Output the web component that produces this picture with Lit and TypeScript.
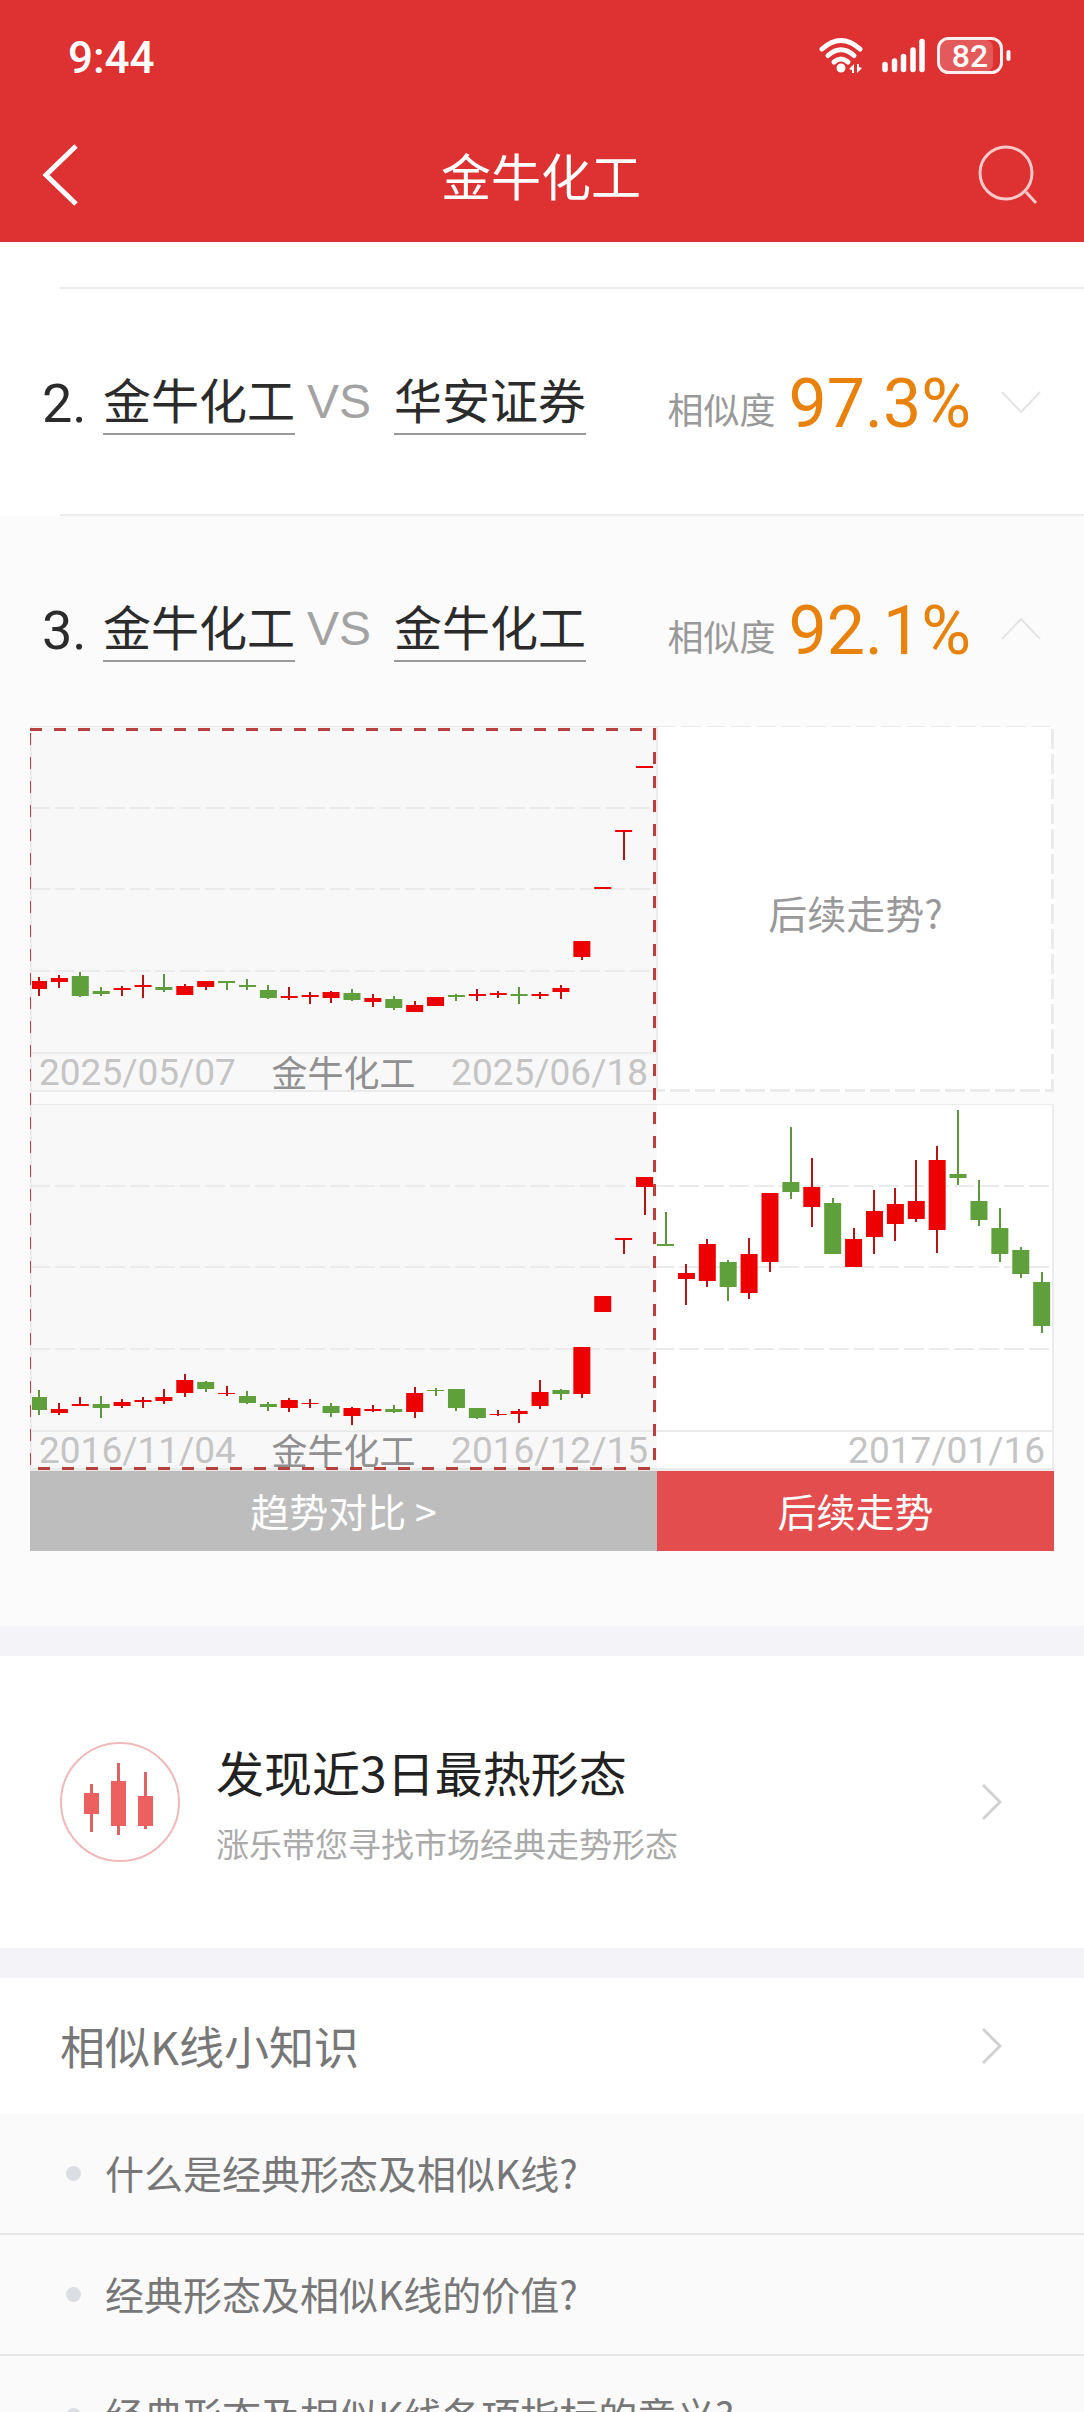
import { LitElement, html, svg, css, nothing } from "lit";
import { customElement, property, state } from "lit/decorators.js";

/** One candle: colour, then high, body top, body bottom and low in plot units. */
type Candle = ["r" | "g", number, number, number, number];

const STEP = 1024 / 49;
const BODY = 17;

const CURRENT: Candle[] = [
  ["r", 250, 254, 262, 269], ["r", 248, 251, 255, 261], ["g", 245, 249, 269, 270],
  ["g", 260, 264, 267, 269], ["r", 259, 261, 263, 269], ["r", 248, 258, 260, 271],
  ["g", 247, 260, 263, 265], ["r", 257, 259, 268, 268], ["r", 254, 254, 260, 263],
  ["g", 254, 254, 256, 263], ["g", 252, 258, 260, 263], ["g", 258, 263, 271, 272],
  ["r", 260, 269, 271, 273], ["r", 265, 268, 270, 277], ["r", 264, 265, 271, 276],
  ["g", 262, 266, 273, 274], ["r", 267, 271, 275, 280], ["g", 269, 272, 281, 283],
  ["r", 274, 278, 285, 285], ["r", 270, 270, 279, 279], ["g", 267, 268, 270, 274],
  ["r", 262, 267, 269, 274], ["r", 264, 266, 268, 271], ["g", 260, 267, 269, 277],
  ["r", 265, 267, 269, 272], ["r", 258, 261, 265, 272], ["r", 214, 214, 230, 233],
  ["r", 160, 160, 162, 162], ["r", 103, 103, 105, 133], ["r", 39, 39, 41, 41],
];

const HISTORY: Candle[] = [
  ["g", 285, 292, 305, 310], ["r", 298, 304, 308, 310], ["r", 292, 299, 301, 301],
  ["g", 291, 299, 303, 313], ["r", 294, 297, 301, 303], ["r", 292, 295, 297, 303],
  ["r", 284, 292, 296, 299], ["r", 269, 275, 288, 292], ["g", 276, 277, 284, 287],
  ["r", 281, 288, 289, 291], ["g", 286, 291, 298, 299], ["g", 297, 299, 302, 306],
  ["r", 293, 295, 303, 307], ["r", 294, 298, 299, 303], ["g", 298, 301, 308, 312],
  ["r", 302, 303, 311, 320], ["r", 300, 304, 306, 307], ["g", 300, 304, 307, 308],
  ["r", 282, 288, 307, 313], ["g", 283, 285, 286, 291], ["g", 284, 284, 303, 306],
  ["g", 303, 303, 313, 314], ["r", 305, 309, 310, 311], ["r", 304, 306, 309, 318],
  ["r", 275, 287, 301, 304], ["g", 284, 285, 289, 295], ["r", 242, 242, 289, 293],
  ["r", 191, 191, 207, 207], ["r", 133, 133, 135, 149], ["r", 72, 72, 82, 110],
];

const FOLLOW: Candle[] = [
  ["g", 107, 139, 141, 141], ["r", 159, 168, 174, 200], ["r", 134, 139, 176, 182],
  ["g", 155, 157, 182, 196], ["r", 133, 149, 188, 194], ["r", 88, 88, 157, 167],
  ["g", 22, 77, 87, 94], ["r", 53, 82, 102, 122], ["g", 93, 98, 149, 149],
  ["r", 123, 134, 162, 162], ["r", 85, 106, 132, 149], ["r", 83, 99, 119, 136],
  ["r", 55, 96, 114, 117], ["r", 41, 55, 125, 148], ["g", 5, 69, 73, 80],
  ["g", 75, 96, 115, 121], ["g", 103, 123, 149, 157], ["g", 142, 145, 169, 173],
  ["g", 167, 177, 221, 228],
];

const QUESTIONS = [
  "什么是经典形态及相似K线?",
  "经典形态及相似K线的价值?",
  "经典形态及相似K线各项指标的意义?",
];

@customElement("candle-plot")
export class CandlePlot extends LitElement {
  @property({ attribute: false }) candles: Candle[] = [];
  @property({ type: Number }) span = 627;
  @property({ type: Number }) phase = 0;

  static styles = css`
    :host { display: block; }
    svg { display: block; width: 100%; height: auto; }
    .grid { stroke: #ebebeb; stroke-width: 2; stroke-dasharray: 20 5; }
    .r { fill: #ec0000; }
    .g { fill: #5fa03c; }
    .wick.r { fill: #b81414; }
    .wick.g { fill: #5d9640; }
  `;

  render() {
    return html`<svg viewBox="0 0 ${this.span} 325" aria-hidden="true">
      ${[81, 162, 244].map(
        (y) => svg`<line class="grid" x1="0" y1=${y} x2=${this.span} y2=${y} stroke-dashoffset=${this.phase}></line>`
      )}
      ${this.candles.map(([tone, high, top, bottom, low], i) => {
        const x = i * STEP;
        return svg`
          <rect class="wick ${tone}" x=${Math.round(x + BODY / 2) - 1} y=${high} width="2" height=${low - high}></rect>
          <rect class=${tone} x=${x} y=${top} width=${BODY} height=${bottom - top}></rect>`;
      })}
    </svg>`;
  }
}

@customElement("trend-compare")
export class TrendCompare extends LitElement {
  static styles = css`
    :host {
      display: grid;
      position: relative;
      grid-template-columns: 627fr 397fr;
      margin: 0 30px;
      font-family: "Noto Sans CJK SC", sans-serif;
    }
    .panel { background: #f8f8f8; border-top: 1px solid #ebebeb; min-width: 0; }
    .first { margin-bottom: 12px; }
    .follow { background: #fff; box-shadow: inset -2px 0 #ebebeb; }
    .labels {
      display: flex;
      justify-content: space-between;
      align-items: center;
      height: 36px;
      padding: 0 9px;
      border-top: 2px solid #ebebeb;
      border-bottom: 2px solid #ebebeb;
      color: #c4c4c4;
      white-space: nowrap;
    }
    .second .labels { border-bottom-width: 3px; }
    .follow .labels { justify-content: flex-end; }
    time { font: 37px/36px Roboto, sans-serif; padding-top: 2px; }
    .stock { font-size: 36px; line-height: 34px; color: #909090; padding-bottom: 2px; }
    .unknown {
      position: relative;
      display: flex;
      align-items: center;
      justify-content: center;
      background: #fff;
      color: #999;
      font-size: 39px;
      line-height: 56px;
    }
    .unknown span { padding-top: 6px; }
    .edge, .frame { position: absolute; inset: 0; width: 100%; height: 100%; }
    .frame { grid-area: 1 / 1 / 3 / 2; overflow: visible; pointer-events: none; }
    .edge line { stroke: #ebebeb; stroke-width: 6; stroke-dasharray: 20 5; }
    .edge .top { stroke-width: 2; }
    .frame .rule { stroke: #ebebeb; stroke-width: 2; }
    .frame .dash { stroke: #b8403e; stroke-width: 3; stroke-dasharray: 12 12; }
    .frame .thin { stroke-width: 1; }
    .tab {
      appearance: none;
      border: 0;
      margin: 0;
      padding: 0 0 2px;
      height: 80px;
      color: #fff;
      font: 39px/56px "Noto Sans CJK SC", sans-serif;
      background: #bdbdbd;
    }
    .tab.on { background: #e44d4e; }
  `;

  private labels(from: string, to: string) {
    return html`<div class="labels">
      <time>${from}</time><span class="stock">金牛化工</span><time>${to}</time>
    </div>`;
  }

  render() {
    return html`
      <div class="panel first">
        <candle-plot .candles=${CURRENT}></candle-plot>
        ${this.labels("2025/05/07", "2025/06/18")}
      </div>
      <div class="unknown first">
        <svg class="edge" aria-hidden="true">
          <line class="top" x1="0" y1="0" x2="100%" y2="0" stroke-dashoffset="1"></line>
          <line x1="100%" y1="0" x2="100%" y2="100%" stroke-dashoffset="-3"></line>
          <line x1="0" y1="100%" x2="100%" y2="100%" stroke-dashoffset="12"></line>
        </svg>
        <span>后续走势?</span>
      </div>
      <div class="panel second">
        <candle-plot .candles=${HISTORY}></candle-plot>
        ${this.labels("2016/11/04", "2016/12/15")}
      </div>
      <div class="panel second follow">
        <candle-plot .candles=${FOLLOW} .span=${397} .phase=${3}></candle-plot>
        <div class="labels"><time>2017/01/16</time></div>
      </div>
      <svg class="frame" aria-hidden="true">
        <line class="rule" x1="1" y1="0" x2="1" y2="100%"></line>
        <line class="rule" x1="100%" y1="0" x2="100%" y2="366"></line>
        <line class="dash" x1="0" y1="3.5" x2="99.5%" y2="3.5"></line>
        <line class="dash thin" x1="0.5" y1="7" x2="0.5" y2="742"></line>
        <svg x="100%" overflow="visible">
          <line class="dash" x1="-2.5" y1="2" x2="-2.5" y2="742"></line>
        </svg>
        <svg y="100%" overflow="visible">
          <line class="dash" x1="8" y1="-2.5" x2="622" y2="-2.5"></line>
        </svg>
      </svg>
      <button class="tab" type="button">趋势对比 &gt;</button>
      <button class="tab on" type="button">后续走势</button>
    `;
  }
}

@customElement("match-row")
export class MatchRow extends LitElement {
  @property({ type: Number }) rank = 1;
  @property() left = "";
  @property() right = "";
  @property() score = "";
  @property({ type: Boolean, reflect: true }) open = false;

  static styles = css`
    :host { display: block; background: #fff; font-family: "Noto Sans CJK SC", sans-serif; }
    :host([open]) { background: #fbfbfb; }
    .row {
      display: flex;
      align-items: center;
      padding: 74px 43px 73px 42px;
      white-space: nowrap;
    }
    :host([open]) .row { padding-bottom: 58px; }
    .rank { width: 61px; padding-top: 4px; font: 54px/64px Roboto, sans-serif; color: #2b2b2b; }
    .name {
      margin-bottom: 6px;
      border-bottom: 2px solid #999;
      color: #2b2b2b;
      font-size: 48px;
      line-height: 70px;
      text-decoration: none;
    }
    .vs { margin: 0 23px 0 12px; font: 48px/64px "Liberation Sans", sans-serif; color: #a3a3a3; }
    .label { margin-left: auto; padding-top: 12px; font-size: 36px; line-height: 52px; color: #999; }
    .score { margin: 0 30px 0 13px; padding-top: 4px; font: 68px/74px Roboto, sans-serif; color: #e8820c; }
    .toggle { appearance: none; border: 0; padding: 0; background: none; line-height: 0; }
    .toggle svg { width: 40px; height: 22px; }
    path { fill: none; stroke: #e4e4e4; stroke-width: 2; }
  `;

  render() {
    return html`
      <div class="row">
        <span class="rank">${this.rank}.</span>
        <a class="name" href="#stock">${this.left}</a>
        <span class="vs">VS</span>
        <a class="name" href="#stock">${this.right}</a>
        <span class="label">相似度</span>
        <span class="score">${this.score}</span>
        <button
          class="toggle"
          type="button"
          aria-label=${this.open ? "收起" : "展开"}
          aria-expanded=${this.open ? "true" : "false"}
          @click=${() => (this.open = !this.open)}
        >
          <svg viewBox="0 0 40 22" aria-hidden="true">
            <path d=${this.open ? "M1 21 20 1 39 21" : "M1 1 20 21 39 1"}></path>
          </svg>
        </button>
      </div>
      ${this.open ? html`<slot></slot>` : nothing}
    `;
  }
}

@customElement("app-root")
export class AppRoot extends LitElement {
  @state() private questions = QUESTIONS;

  static styles = css`
    :host {
      display: block;
      height: 100vh;
      overflow: hidden;
      background: #f3f3f8;
      font-family: "Noto Sans CJK SC", sans-serif;
    }
    a { color: inherit; text-decoration: none; }
    button { appearance: none; border: 0; padding: 0; background: none; line-height: 0; }
    ul { list-style: none; margin: 0; padding: 0; }
    h1, h2, p { margin: 0; font-weight: 400; }

    .header { background: #de3131; color: #fff; padding-bottom: 4px; }
    .status {
      display: flex;
      align-items: center;
      justify-content: space-between;
      height: 112px;
      padding: 0 73px 0 68px;
    }
    .clock { font: 500 44px/64px Roboto, sans-serif; padding-top: 4px; }
    .signals { width: 192px; height: 38px; }
    .level { font: 500 32px Roboto, sans-serif; fill: #fff; }
    .nav {
      display: grid;
      grid-template-columns: 1fr auto 1fr;
      align-items: center;
      height: 126px;
      padding: 0 44px 0 42px;
    }
    .nav h1 { font-size: 50px; line-height: 72px; padding-bottom: 2px; }
    .back { justify-self: start; }
    .back svg { width: 38px; height: 62px; }
    .search { justify-self: end; padding-top: 2px; }
    .search svg { width: 62px; height: 62px; }

    .matches { background: #fff; padding-top: 45px; }
    .rule { height: 2px; margin-left: 60px; background: #ebebeb; }
    trend-compare { padding-bottom: 75px; }

    .promo {
      display: flex;
      align-items: center;
      gap: 36px;
      margin: 30px 0;
      padding: 80px 82px 80px 60px;
      background: #fff;
    }
    .badge { width: 120px; height: 120px; flex: none; }
    .promo h2 { font-size: 48px; line-height: 70px; color: #222; }
    .promo p { font-size: 33px; line-height: 50px; margin-top: 12px; color: #aaa; }
    .promo .words { flex: 1; }
    .go { width: 20px; height: 38px; flex: none; }
    .go path { fill: none; stroke: #d0d0d0; stroke-width: 3; }

    .topic {
      display: flex;
      align-items: center;
      justify-content: space-between;
      height: 136px;
      padding: 0 82px 0 60px;
      background: #fff;
      color: #777;
    }
    .topic h2 { font-size: 45px; line-height: 66px; }
    .item {
      display: flex;
      align-items: center;
      gap: 24px;
      height: 119px;
      padding-left: 66px;
      border-bottom: 2px solid #e6e6e6;
      background: #fafafa;
      color: #777;
      font-size: 39px;
      line-height: 56px;
      white-space: nowrap;
    }
    .item span { padding-bottom: 4px; }
    .item::before { content: ""; width: 15px; height: 15px; border-radius: 50%; background: #dbdfe3; }
  `;

  private go() {
    return html`<svg class="go" viewBox="0 0 20 38" aria-hidden="true"><path d="M1 2 18 19 1 36"></path></svg>`;
  }

  private signals() {
    return html`<svg class="signals" viewBox="0 0 192 38" aria-hidden="true">
      <g fill="none" stroke="#fff" stroke-width="5" stroke-linecap="round">
        <path d="M3 12Q22 -5 41 12"></path>
        <path d="M9 18.500Q22 7 35 18.500"></path>
        <path d="M15 25Q22 19 29 25"></path>
      </g>
      <circle cx="22" cy="31" r="4.500" fill="#fff"></circle>
      <path d="M30 32l5-5v9h-2v-3zM43 31l-5 5v-9h2v3z" fill="#fff"></path>
      <g stroke="#fff" stroke-width="5.500" stroke-linecap="round">
        <path d="M66 27.500V32.500M75.500 24V32.500M84.500 19.500V32.500M94 13V32.500M103 4.500V32.500"></path>
      </g>
      <rect x="121" y="3" width="53" height="32" rx="8" fill="#fff" fill-opacity=".2"></rect>
      <rect x="119.500" y="1.500" width="63" height="34" rx="10" fill="none" stroke="#fff" stroke-opacity=".92" stroke-width="3"></rect>
      <rect x="187.500" y="13" width="4" height="11" rx="2" fill="#fff"></rect>
      <text class="level" x="151" y="30" text-anchor="middle">82</text>
    </svg>`;
  }

  render() {
    return html`
      <header class="header">
        <div class="status">
          <span class="clock">9:44</span>
          ${this.signals()}
        </div>
        <nav class="nav">
          <button class="back" type="button" aria-label="返回">
            <svg viewBox="0 0 38 62" aria-hidden="true">
              <path d="M34 2 4 31 34 60" fill="none" stroke="#fff" stroke-width="5"></path>
            </svg>
          </button>
          <h1>金牛化工</h1>
          <button class="search" type="button" aria-label="搜索">
            <svg viewBox="0 0 62 62" fill="none" stroke="#fac8c8" stroke-width="3" aria-hidden="true">
              <circle cx="28" cy="28" r="26"></circle>
              <path d="M48 47 58 58"></path>
            </svg>
          </button>
        </nav>
      </header>

      <main>
        <section class="matches">
          <div class="rule"></div>
          <match-row .rank=${2} left="金牛化工" right="华安证券" score="97.3%"></match-row>
          <div class="rule"></div>
          <match-row .rank=${3} left="金牛化工" right="金牛化工" score="92.1%" open>
            <trend-compare></trend-compare>
          </match-row>
        </section>

        <a class="promo" href="#patterns">
          <svg class="badge" viewBox="0 0 120 120" aria-hidden="true">
            <circle cx="60" cy="60" r="59" fill="none" stroke="#f0b9b9" stroke-width="2"></circle>
            <g fill="#ec6060">
              <rect x="24" y="51" width="15" height="21"></rect>
              <rect x="51" y="39" width="15" height="45"></rect>
              <rect x="78" y="54" width="15" height="30"></rect>
            </g>
            <g fill="#dc6464">
              <rect x="30" y="42" width="3" height="9"></rect>
              <rect x="30" y="72" width="3" height="18"></rect>
              <rect x="57" y="21" width="3" height="18"></rect>
              <rect x="57" y="84" width="3" height="9"></rect>
              <rect x="84" y="30" width="3" height="24"></rect>
              <rect x="84" y="84" width="3" height="3"></rect>
            </g>
          </svg>
          <div class="words">
            <h2>发现近3日最热形态</h2>
            <p>涨乐带您寻找市场经典走势形态</p>
          </div>
          ${this.go()}
        </a>

        <section>
          <a class="topic" href="#knowledge">
            <h2>相似K线小知识</h2>
            ${this.go()}
          </a>
          <ul>
            ${this.questions.map((q) => html`<li><a class="item" href="#question"><span>${q}</span></a></li>`)}
          </ul>
        </section>
      </main>
    `;
  }
}
